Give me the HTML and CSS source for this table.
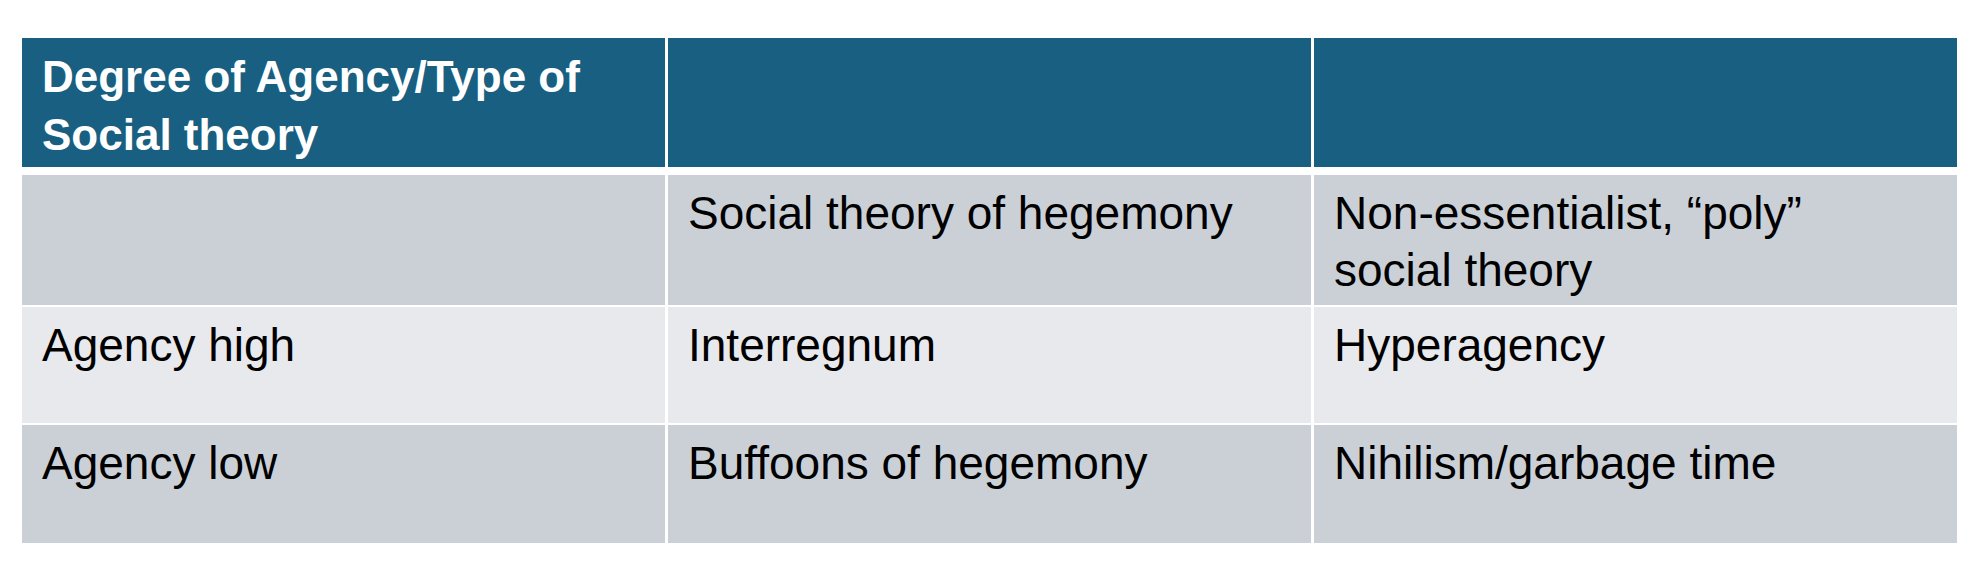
FILE: index.html
```html
<!DOCTYPE html>
<html lang="en">
<head>
<meta charset="utf-8">
<title>Degree of Agency / Type of Social theory</title>
<link rel="stylesheet" href="styles.css">
</head>
<body>
<div class="tbl">
  <div class="row head">
    <div class="cell">Degree of Agency/Type of Social theory</div>
    <div class="cell"></div>
    <div class="cell"></div>
  </div>
  <div class="row band r1">
    <div class="cell"></div>
    <div class="cell">Social theory of hegemony</div>
    <div class="cell">Non-essentialist, “poly”<br>social theory</div>
  </div>
  <div class="row light r2">
    <div class="cell">Agency high</div>
    <div class="cell">Interregnum</div>
    <div class="cell">Hyperagency</div>
  </div>
  <div class="row band r3">
    <div class="cell">Agency low</div>
    <div class="cell">Buffoons of hegemony</div>
    <div class="cell">Nihilism/garbage time</div>
  </div>
</div>
</body>
</html>
```

FILE: styles.css
```css
html, body {
  margin: 0;
  padding: 0;
  background: #ffffff;
}

body {
  font-family: "Liberation Sans", Arial, sans-serif;
  color: #000000;
}

.tbl {
  margin: 38px 0 0 22px;
  width: 1935px;
  display: flex;
  flex-direction: column;
  gap: 2px;
}

.row {
  display: grid;
  grid-template-columns: 643px 643px 643px;
  column-gap: 3px;
}

.cell {
  padding: 10px 20px 0 20px;
  font-size: 46px;
  line-height: 57px;
}

.head {
  height: 129px;
  margin-bottom: 6px;
}

.head .cell {
  background: #185f81;
  color: #ffffff;
  font-weight: 700;
  font-size: 44px;
  line-height: 58px;
}

.band .cell {
  background: #cbd0d7;
}

.light .cell {
  background: #e7e9ec;
}

.r1 { height: 130px; }
.r2 { height: 116px; }
.r3 { height: 118px; }
```
